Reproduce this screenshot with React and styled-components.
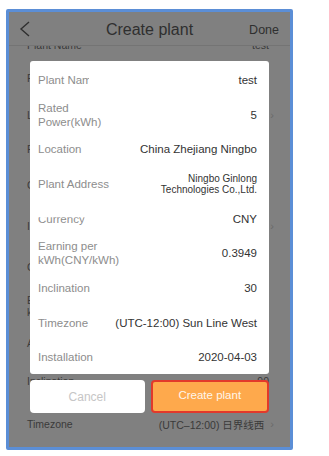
import React from 'react';
import styled, { createGlobalStyle } from 'styled-components';

const Global = createGlobalStyle`
  html, body { margin: 0; padding: 0; background: #ffffff; }
  body { font-family: "Liberation Sans", Arial, "Noto Sans CJK SC", sans-serif; }
  * { box-sizing: border-box; }
`;

const Page = styled.div`
  width: 329px;
  height: 456px;
  padding: 9px 0 0 6px;
`;

const Frame = styled.div`
  position: relative;
  width: 287px;
  height: 441px;
  border: 3px solid #5b8ed6;
  border-radius: 2px;
  background: #808080;
  overflow: hidden;
`;

const Header = styled.div`
  position: relative;
  z-index: 1;
  height: 34px;
  display: flex;
  align-items: center;
  justify-content: space-between;
  padding: 0 11px 0 10px;
  background: #808080;
  border-bottom: 1px solid #747474;
`;

const Back = styled.svg`
  width: 12px;
  height: 16px;
  display: block;
`;

const Title = styled.div`
  position: absolute;
  left: 0;
  right: 0;
  top: 0;
  height: 34px;
  line-height: 35px;
  text-align: center;
  font-size: 16px;
  color: #2f2f2f;
  pointer-events: none;
`;

const Done = styled.div`
  font-size: 12.5px;
  color: #2f2f2f;
  margin-top: 2px;
`;

const List = styled.div`
  margin-top: -14px;
  display: flex;
  flex-direction: column;
`;

const BgRow = styled.div`
  height: ${p => p.$h}px;
  display: flex;
  align-items: center;
  justify-content: space-between;
  padding: 0 ${p => (p.$chevron ? 16 : 21)}px 0 18px;
  font-size: 10.5px;
  color: #3a3a3a;
`;

const BgLabel = styled.div`
  line-height: 12px;
`;

const BgValue = styled.div`
  display: flex;
  align-items: center;
  gap: 6px;
  color: #3a3a3a;
`;

const Chevron = styled.span`
  color: #6a6a6a;
  font-size: 11px;
`;

const Dialog = styled.div`
  position: absolute;
  left: 21px;
  top: 49px;
  width: 239px;
  z-index: 2;
  display: flex;
  flex-direction: column;
  gap: 6px;
`;

const Card = styled.div`
  background: #ffffff;
  border-radius: 3px;
  display: flex;
  flex-direction: column;
`;

const Row = styled.div`
  height: ${p => p.$h}px;
  display: flex;
  align-items: center;
  justify-content: space-between;
  padding: 0 12px 0 8px;
  gap: 8px;
`;

const Label = styled.div`
  font-size: 11.5px;
  line-height: 14px;
  color: #8d8d8d;
  max-width: 80px;
  ${p => p.$clip ? `width: ${p.$clip}px; white-space: nowrap; overflow: hidden;` : ''}
  ${p => p.$cutTop ? 'clip-path: inset(38% 0 0 0);' : ''}
`;

const Value = styled.div`
  font-size: ${p => (p.$small ? 10 : 11.5)}px;
  line-height: ${p => (p.$small ? 11.5 : 14)}px;
  color: #333333;
  text-align: right;
  white-space: nowrap;
`;

const Buttons = styled.div`
  display: flex;
  gap: 6px;
`;

const Button = styled.div`
  flex: 1;
  height: 33px;
  border-radius: 4px;
  display: flex;
  align-items: center;
  justify-content: center;
  font-size: ${p => (p.$primary ? 11.5 : 12)}px;
  background: ${p => (p.$primary ? '#fea94c' : '#ffffff')};
  color: ${p => (p.$primary ? '#fff6ea' : '#c6c6c6')};
  border: ${p => (p.$primary ? '2px solid #e2392b' : 'none')};
  padding-bottom: ${p => (p.$primary ? 3 : 0)}px;
`;

const bgRows = [
  { label: 'Plant Name', value: 'test', h: 26 },
  { label: 'Plant Type', h: 39 },
  { label: 'Location', h: 35, chevron: true },
  { label: 'Plant Address', h: 34 },
  { label: 'Contact', h: 38 },
  { label: 'Installed', h: 43, chevron: true },
  { label: 'Currency', h: 40 },
  { label: ['Earning per', 'kWh(CNY/kWh)'], h: 37 },
  { label: 'Azimuth', h: 37 },
  { label: 'Inclination', value: '90', h: 40 },
  { label: 'Timezone', value: '(UTC–12:00) 日界线西', h: 46, chevron: true },
];

const cardRows = [
  { label: 'Plant Name', value: 'test', h: 37, clip: 51 },
  { label: 'Rated Power(kWh)', value: '5', h: 34 },
  { label: 'Location', value: 'China Zhejiang Ningbo', h: 34 },
  { label: 'Plant Address', value: ['Ningbo Ginlong', 'Technologies Co.,Ltd.'], h: 36, small: true },
  { label: 'Currency', value: 'CNY', h: 34, cutTop: true },
  { label: 'Earning per kWh(CNY/kWh)', value: '0.3949', h: 34 },
  { label: 'Inclination', value: '30', h: 35 },
  { label: 'Timezone', value: '(UTC-12:00) Sun Line West', h: 35 },
  { label: 'Installation', value: '2020-04-03', h: 34, clip: 55 },
];

const lines = v => (Array.isArray(v) ? v.map((t, i) => <div key={i}>{t}</div>) : v);

export default function App() {
  return (
    <>
      <Global />
      <Page>
        <Frame>
          <Header>
            <Back viewBox="0 0 12 16">
              <polyline points="10,1 2,8 10,15" fill="none" stroke="#2f2f2f" strokeWidth="1.4" strokeLinejoin="miter" />
            </Back>
            <Title>Create plant</Title>
            <Done>Done</Done>
          </Header>
          <List>
            {bgRows.map((r, i) => (
              <BgRow key={i} $h={r.h} $chevron={r.chevron}>
                <BgLabel>{lines(r.label)}</BgLabel>
                <BgValue>
                  {r.value}
                  {r.chevron && <Chevron>›</Chevron>}
                </BgValue>
              </BgRow>
            ))}
          </List>
          <Dialog>
            <Card>
              {cardRows.map((r, i) => (
                <Row key={i} $h={r.h}>
                  <Label $clip={r.clip} $cutTop={r.cutTop}>{r.label}</Label>
                  <Value $small={r.small}>{lines(r.value)}</Value>
                </Row>
              ))}
            </Card>
            <Buttons>
              <Button>Cancel</Button>
              <Button $primary>Create plant</Button>
            </Buttons>
          </Dialog>
        </Frame>
      </Page>
    </>
  );
}
